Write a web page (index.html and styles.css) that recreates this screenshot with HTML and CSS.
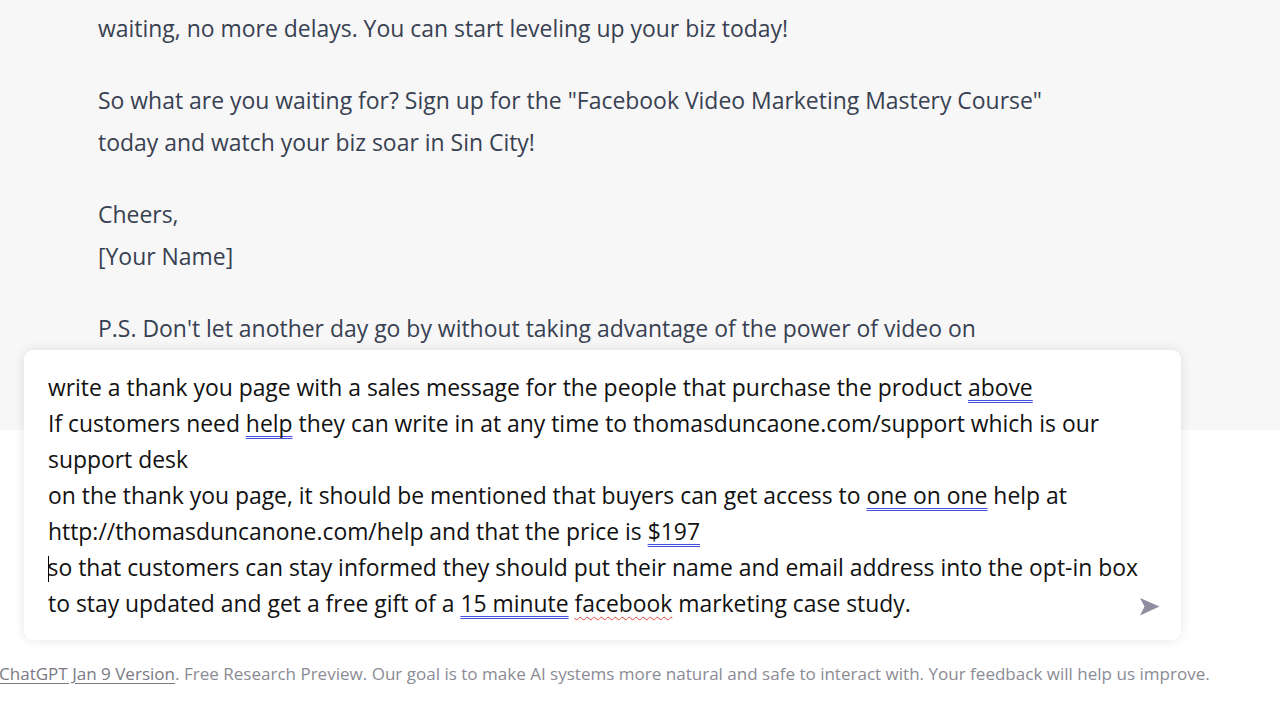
FILE: index.html
```html
<!DOCTYPE html>
<html lang="en">
<head>
<meta charset="utf-8">
<title>ChatGPT</title>
<link rel="stylesheet" href="styles.css">
</head>
<body>
<div class="page">
  <main class="thread">
    <div class="message">
      <p>waiting, no more delays. You can start leveling up your biz today!</p>
      <p><span class="ln">So what are you waiting for? Sign up for the "Facebook Video Marketing Mastery Course"</span><span class="ln">today and watch your biz soar in Sin City!</span></p>
      <p><span class="ln">Cheers,</span><span class="ln">[Your Name]</span></p>
      <p>P.S. Don't let another day go by without taking advantage of the power of video on</p>
    </div>
  </main>
  <section class="composer">
    <div class="input">
      <div class="ln">write a thank you page with a sales message for the people that purchase the product <span class="ed">above</span></div>
      <div class="ln">If customers need <span class="ed">help</span> they can write in at any time to thomasduncaone.com/support which is our</div>
      <div class="ln">support desk</div>
      <div class="ln">on the thank you page, it should be mentioned that buyers can get access to <span class="ed">one on one</span> help at</div>
      <div class="ln">http://thomasduncanone.com/help and that the price is <span class="ed">$197</span></div>
      <div class="ln"><span class="caret"></span>so that customers can stay informed they should put their name and email address into the opt-in box</div>
      <div class="ln">to stay updated and get a free gift of a <span class="ed">15 minute</span> <span class="sp">facebook</span> marketing case study.</div>
    </div>
    <button class="send" aria-label="Send">
      <svg width="22" height="20" viewBox="0 0 22 20"><polygon points="1,1 20.5,9.5 1,18.5 5.5,9.5" fill="#8e8ea0"/></svg>
    </button>
  </section>
  <footer class="footer">
    <span><a class="ver">ChatGPT Jan 9 Version</a>. Free Research Preview. Our goal is to make AI systems more natural and safe to interact with. Your feedback will help us improve.</span>
  </footer>
</div>
</body>
</html>
```
FILE: styles.css
```css
html, body {
  margin: 0;
  padding: 0;
  background: #ffffff;
}
.page {
  position: relative;
  width: 1280px;
  height: 720px;
  overflow: hidden;
  font-family: "Open Sans", "Noto Sans", sans-serif;
}
.thread {
  height: 430px;
  background: #f7f7f8;
  overflow: hidden;
}
.message {
  padding: 7px 0 0 98px;
  color: #374151;
  font-size: 22.95px;
  line-height: 42px;
}
.message p {
  margin: 0 0 30px 0;
  white-space: nowrap;
}
.ln {
  display: block;
  white-space: nowrap;
}
.composer {
  position: absolute;
  left: 24px;
  top: 350px;
  width: 1157px;
  height: 290px;
  box-sizing: border-box;
  background: #ffffff;
  border-radius: 9px;
  box-shadow: 0 0 12px rgba(0, 0, 0, 0.10);
  display: flex;
  align-items: flex-end;
}
.input {
  flex: 1;
  padding: 20px 0 18px 24px;
  color: #111111;
  font-size: 22.9px;
  line-height: 36px;
}
.ed {
  text-decoration: underline double #4352d8;
  text-decoration-thickness: 1px;
  text-decoration-skip-ink: none;
  text-underline-offset: 4px;
}
.sp {
  text-decoration: underline wavy #e0443c;
  text-decoration-thickness: 1.2px;
  text-decoration-skip-ink: none;
  text-underline-offset: 4px;
}
.caret {
  display: inline-block;
  width: 0;
  height: 26px;
  border-left: 1.5px solid #000;
  vertical-align: -6px;
  margin-right: -1.5px;
}
.send {
  border: 0;
  background: none;
  padding: 0;
  margin: 0 20px 23px 0;
  width: 22px;
  height: 20px;
  display: flex;
}
.footer {
  height: 66px;
  display: flex;
  align-items: center;
  padding: 210px 0 0 0;
  box-sizing: content-box;
  color: #8b8b95;
  font-size: 17.05px;
  white-space: nowrap;
}
.footer span {
  margin-left: -1px;
}
.ver {
  color: #7a7a84;
  text-decoration: underline;
  text-underline-offset: 3px;
}
```
